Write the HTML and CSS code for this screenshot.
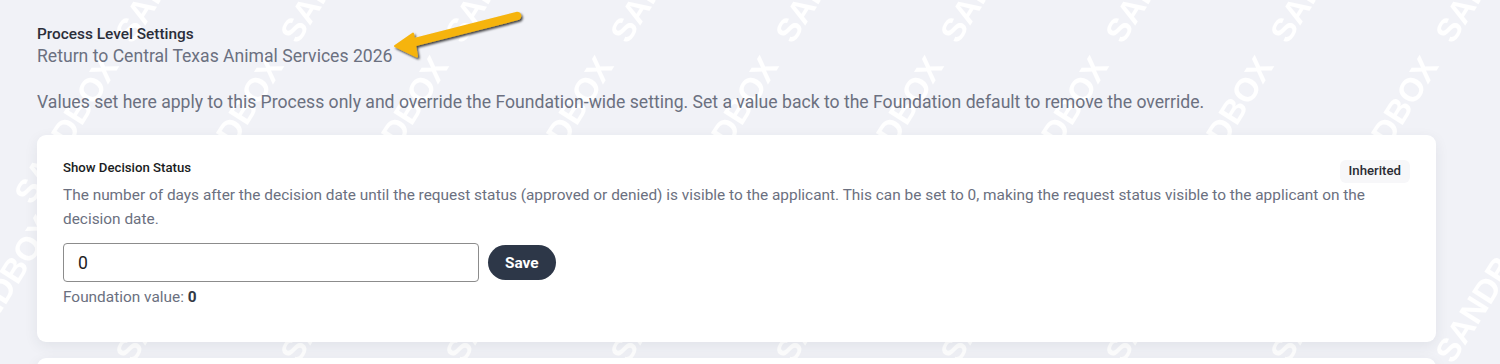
FILE: index.html
```html
<!DOCTYPE html>
<html lang="en">
<head>
<meta charset="utf-8">
<title>Process Level Settings</title>
<link rel="stylesheet" href="styles.css">
</head>
<body>
<div class="page">
  <svg class="watermark" aria-hidden="true">
    <defs>
      <pattern id="wm" patternUnits="userSpaceOnUse" x="0" y="0" width="165" height="320">
        <g class="wm-text">
          <text x="133" y="45" transform="rotate(-58 133 45)">SANDBOX</text>
          <text x="-32" y="45" transform="rotate(-58 -32 45)">SANDBOX</text>
          <text x="133" y="365" transform="rotate(-58 133 365)">SANDBOX</text>
          <text x="-32" y="365" transform="rotate(-58 -32 365)">SANDBOX</text>
          <text x="32" y="206" transform="rotate(-58 32 206)">SANDBOX</text>
          <text x="197" y="206" transform="rotate(-58 197 206)">SANDBOX</text>
        </g>
      </pattern>
    </defs>
    <rect width="100%" height="100%" fill="url(#wm)"></rect>
  </svg>

  <svg class="arrow" viewBox="0 0 150 60" width="150" height="60" aria-hidden="true">
    <defs>
      <filter id="shadow" x="-20%" y="-40%" width="140%" height="180%">
        <feDropShadow dx="1.5" dy="1.8" stdDeviation="1.3" flood-color="#000" flood-opacity="0.75"></feDropShadow>
      </filter>
    </defs>
    <g filter="url(#shadow)" fill="#f6b40c" stroke="#f6b40c">
      <line x1="132" y1="11" x2="26" y2="38" stroke-width="8.5" stroke-linecap="round"></line>
      <polygon points="10,41 28,28.5 32,51.5" stroke-width="2" stroke-linejoin="round"></polygon>
    </g>
  </svg>

  <main class="content">
    <header class="head">
      <div class="eyebrow">Process Level Settings</div>
      <div class="process-name">Return to Central Texas Animal Services 2026</div>
    </header>
    <p class="intro">Values set here apply to this Process only and override the Foundation-wide setting. Set a value back to the Foundation default to remove the override.</p>

    <section class="card">
      <div class="card-head">
        <div class="card-title">Show Decision Status</div>
        <span class="badge">Inherited</span>
      </div>
      <p class="card-desc">The number of days after the decision date until the request status (approved or denied) is visible to the applicant. This can be set to 0, making the request status visible to the applicant on the decision date.</p>
      <div class="field-row">
        <input class="field" type="text" value="0">
        <button class="save" type="button">Save</button>
      </div>
      <div class="foundation">Foundation value: <strong>0</strong></div>
    </section>

    <section class="card">
      <div class="card-head">
        <div class="card-title">Show Decision Comments</div>
        <span class="badge">Inherited</span>
      </div>
      <p class="card-desc">Whether decision comments are visible to the applicant.</p>
    </section>
  </main>
</div>
</body>
</html>
```

FILE: styles.css
```css
html, body {
  margin: 0;
  padding: 0;
  overflow: hidden;
}

body {
  background: #f1f2f7;
  font-family: Roboto, "Liberation Sans", Arial, sans-serif;
  color: #2c2f3a;
}

.page {
  position: relative;
  min-height: 364px;
}

.watermark {
  position: absolute;
  top: 0;
  left: 0;
  width: 100%;
  height: 100%;
  z-index: 0;
}

.wm-text {
  font-family: "Liberation Sans", Arial, sans-serif;
  font-weight: 700;
  font-size: 33px;
  fill: #ffffff;
}

.arrow {
  position: absolute;
  left: 385px;
  top: 5px;
  z-index: 2;
  overflow: visible;
}

.content {
  position: relative;
  z-index: 1;
  padding: 24px 64px 0 37px;
}

.head {
  display: flex;
  flex-direction: column;
}

.eyebrow {
  font-size: 15.4px;
  line-height: 20px;
  font-weight: 500;
  color: #2b2e3a;
}

.process-name {
  font-size: 17.6px;
  line-height: 24px;
  color: #6b7080;
}

.intro {
  margin: 22px 0 0;
  font-size: 17.6px;
  line-height: 24px;
  color: #6b7080;
}

.card {
  margin-top: 21px;
  background: #ffffff;
  border-radius: 9px;
  padding: 24px 26px 35px;
  box-shadow: 0 4px 14px rgba(40, 45, 70, 0.08);
}

.card + .card {
  margin-top: 16px;
}

.card-head {
  display: flex;
  justify-content: space-between;
  align-items: flex-start;
}

.card-title {
  font-size: 13.2px;
  line-height: 18px;
  font-weight: 500;
  color: #1a1c22;
}

.badge {
  margin-top: 1px;
  padding: 3px 9px 4px;
  font-size: 13.2px;
  line-height: 16px;
  font-weight: 500;
  color: #2a2c33;
  background: #f7f7f9;
  border-radius: 6px;
}

.card-desc {
  margin: 0;
  font-size: 15.4px;
  line-height: 24px;
  color: #6b7080;
}

.field-row {
  display: flex;
  align-items: center;
  gap: 9px;
  margin-top: 12px;
}

.field {
  box-sizing: border-box;
  width: 416px;
  height: 39px;
  padding: 0 14px;
  border: 1px solid #8c8c8c;
  border-radius: 4px;
  font-family: Roboto, "Liberation Sans", Arial, sans-serif;
  font-size: 17.6px;
  color: #222;
  background: #fff;
}

.save {
  height: 35px;
  padding: 0 17px;
  border: 0;
  border-radius: 18px;
  background: #2d3748;
  color: #ffffff;
  font-family: Roboto, "Liberation Sans", Arial, sans-serif;
  font-size: 15.4px;
  font-weight: 700;
}

.foundation {
  margin-top: 5px;
  font-size: 15.4px;
  line-height: 20px;
  color: #6b7080;
}

.foundation strong {
  color: #333844;
  font-weight: 700;
}
```
